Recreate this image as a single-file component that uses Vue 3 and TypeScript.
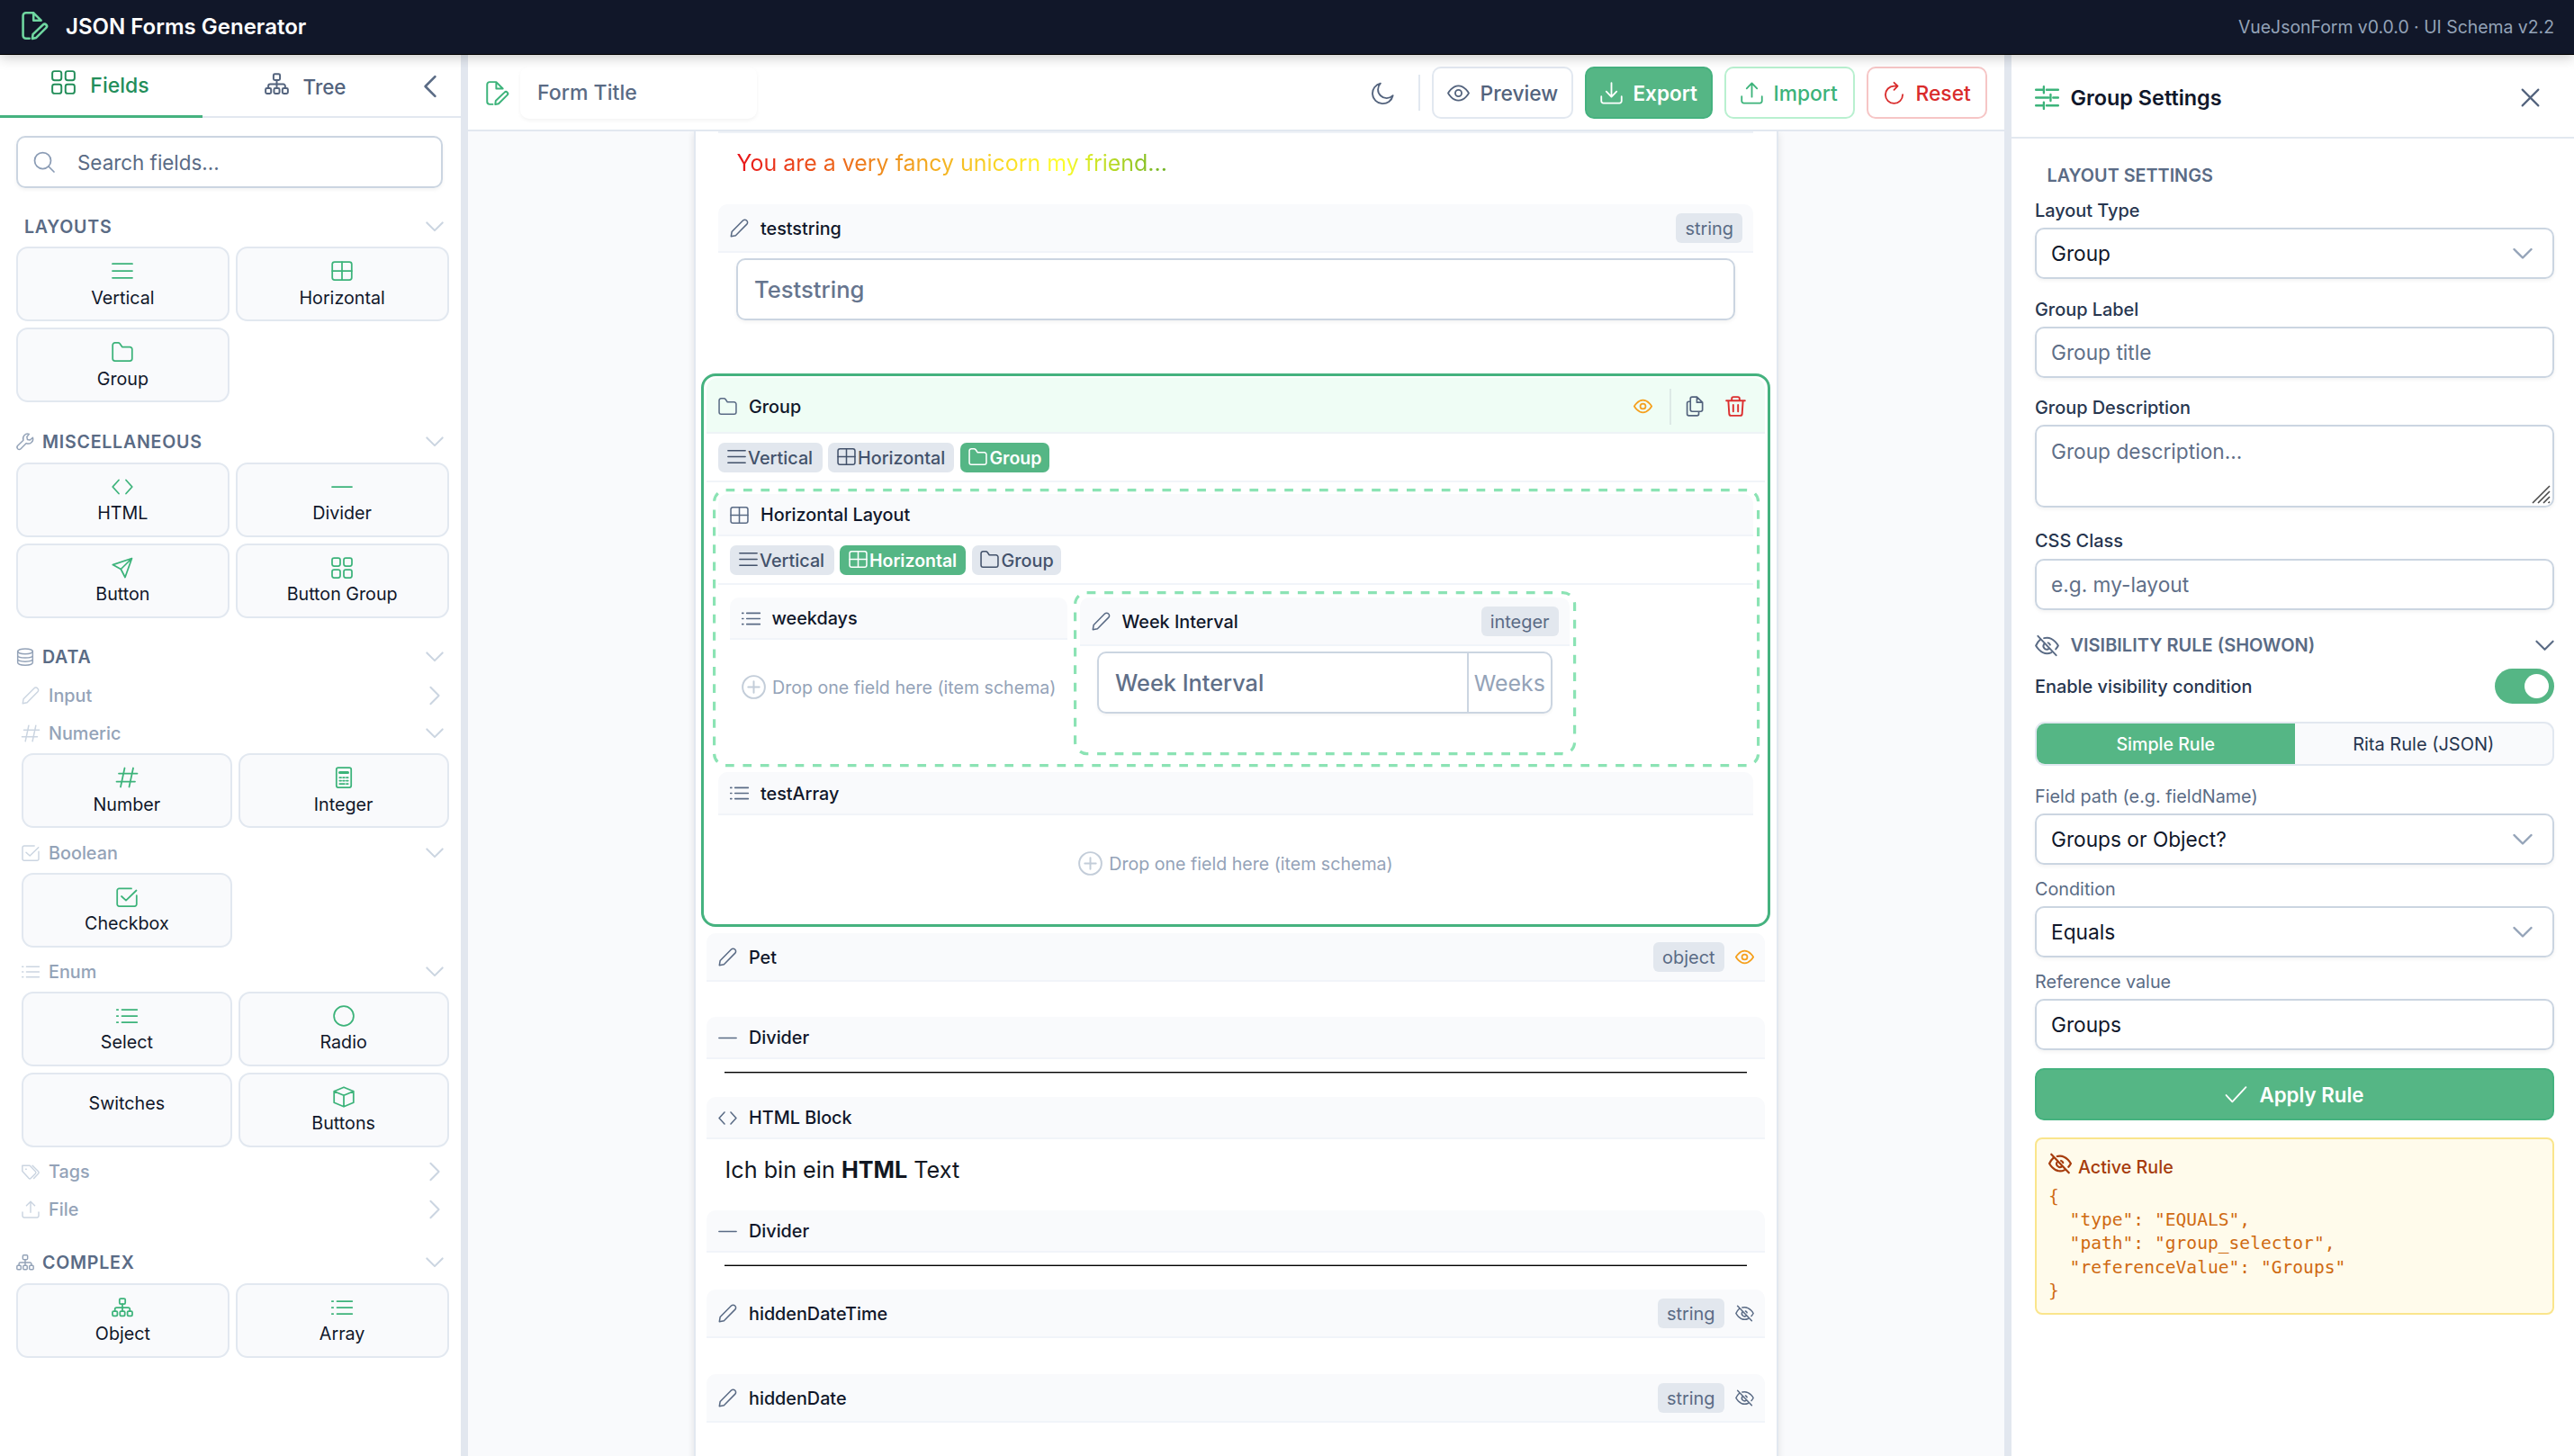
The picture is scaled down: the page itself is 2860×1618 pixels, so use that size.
<script setup lang="ts">
import { h } from 'vue'

const paths: Record<string, string> = {
  fileEdit: '<path d="M7.500 23H4.500a2.500 2.500 0 0 1-2.500-2.500v-17A2.500 2.500 0 0 1 4.500 1H11l6.500 6.500M11 1v6.500h6.500"/><path d="M10.500 19.500l8.700-8.300a1.900 1.900 0 0 1 2.700 2.700L13.300 22.400l-3.300.8z"/>',
  grid: '<rect x="1" y="1" width="9" height="9" rx="2.200"/><rect x="14" y="1" width="9" height="9" rx="2.200"/><rect x="1" y="14" width="9" height="9" rx="2.200"/><rect x="14" y="14" width="9" height="9" rx="2.200"/>',
  sitemap: '<rect x="8.800" y="2" width="6.400" height="6" rx="1.300"/><rect x="1" y="16" width="5.400" height="5.400" rx="1.300"/><rect x="9.300" y="16" width="5.400" height="5.400" rx="1.300"/><rect x="17.600" y="16" width="5.400" height="5.400" rx="1.300"/><path d="M12 8v8M3.700 16v-2.200a1.800 1.800 0 0 1 1.800-1.800h13a1.800 1.800 0 0 1 1.800 1.800V16"/>',
  search: '<circle cx="10.500" cy="10.500" r="9"/><path d="M17 17l6 6"/>',
  bars: '<path d="M1 4.200h22M1 12h22M1 19.800h22"/>',
  table: '<rect x="1.200" y="2" width="21.600" height="20" rx="2.600"/><path d="M12 2v20M1.200 12h21.600"/>',
  folder: '<path d="M1.200 19.500v-15A2.600 2.600 0 0 1 3.800 1.900h3.400c.8 0 1.400.3 1.900.9l2.600 3.800h8.500a2.600 2.600 0 0 1 2.600 2.600v10.300a2.600 2.600 0 0 1-2.600 2.600H3.800a2.600 2.600 0 0 1-2.600-2.600z"/>',
  wrench: '<path d="M17.200 1.600a6.300 6.300 0 0 0-7.700 8.200L2 17.200a2.900 2.900 0 0 0 0 4 2.900 2.900 0 0 0 4.100 0l7.400-7.300a6.300 6.300 0 0 0 8.600-7.600l-3.700 3.300-3.500-.7-.7-3.600z"/>',
  code: '<path d="M8 4.500L1.200 12 8 19.500M16 4.500L22.800 12 16 19.500"/>',
  minus: '<path d="M1 12h22"/>',
  send: '<path d="M22.500 1.500L1.300 8.600l9 4.900 4.700 9zM22.500 1.500L10.300 13.500"/>',
  database: '<ellipse cx="12" cy="4.600" rx="10" ry="3.500"/><path d="M2 4.600v15c0 2 4.500 3.500 10 3.500s10-1.500 10-3.500v-15M2 9.800c0 2 4.500 3.400 10 3.400s10-1.400 10-3.400M2 14.800c0 2 4.500 3.400 10 3.400s10-1.400 10-3.400"/>',
  pencil: '<path d="M1.500 22.500l1-6L16.600 2.300a3.300 3.300 0 0 1 4.700 0 3.300 3.300 0 0 1 .2 4.700L7.300 21.400z"/>',
  hash: '<path d="M9.500 1.500l-4.500 21M19 1.500l-4.500 21M3 7.500h20.500M.5 16.500H21"/>',
  calc: '<rect x="3.800" y="1" width="16.400" height="22" rx="2"/><path d="M7.500 6.500h9" stroke-width="3"/><path d="M7.300 12h1.800M11.100 12h1.800M14.900 12h1.800M7.300 15.500h1.800M11.100 15.500h1.800M14.900 15.500h1.800M7.300 19h5.600M14.900 19h1.800"/>',
  check: '<path d="M1.500 12.500l6.500 7L22.500 4"/>',
  checkSquare: '<path d="M17 2.400H3.400a2.200 2.200 0 0 0-2.200 2.200v15.200A2.200 2.200 0 0 0 3.400 22h17.200a2.200 2.200 0 0 0 2.200-2.200V10M6 11l5 4.600L22.500 4.500"/>',
  list: '<path d="M6.500 5h16.800M6.500 12h16.800M6.500 19h16.800M.8 5h1.400M.8 12h1.400M.8 19h1.400"/>',
  circle: '<circle cx="12" cy="12" r="10.900"/>',
  box: '<path d="M12 1.200l10.800 4.500v12.600L12 22.800 1.200 18.300V5.700zM1.200 5.700L12 10.200l10.800-4.500M12 10.200v12.600"/>',
  tags: '<path d="M1 4v7.500l8.500 9.300c.9.900 2 .9 2.900 0l6-6.200c.9-.9.900-2 0-2.900L11 4zM14.500 4l7.800 7.800c.9.900.9 2 0 2.900l-6 6.300M5.500 8.600h.8"/>',
  upload: '<path d="M1.200 15.500v5a2.200 2.200 0 0 0 2.200 2.200h17.200a2.200 2.200 0 0 0 2.200-2.200v-5M12 16V1.500M6.500 7L12 1.400 17.500 7"/>',
  download: '<path d="M1.200 15.500v5a2.200 2.200 0 0 0 2.200 2.200h17.200a2.200 2.200 0 0 0 2.200-2.200v-5M12 1.200v14.500M6.500 10.300L12 15.900l5.500-5.600"/>',
  moon: '<path d="M9.500 1.500A11 11 0 1 0 22.700 14.600 8 8 0 0 1 9.500 1.500z"/>',
  eye: '<path d="M1 12s4.200-7.800 11-7.800S23 12 23 12s-4.200 7.800-11 7.800S1 12 1 12z"/><circle cx="12" cy="12" r="3.400"/>',
  eyeSlash: '<path d="M5 6.300C2.500 8.500 1 12 1 12s4.200 7.800 11 7.800c1.600 0 3-.4 4.300-1M9 4.600c1-.3 2-.4 3-.4 6.800 0 11 7.800 11 7.800s-.9 1.700-2.400 3.500M3 2.500l18 19M9 10.400a3.400 3.400 0 0 0 5 4.500M13 9.200a3 3 0 0 1 2 2"/>',
  refresh: '<path d="M12 4.500a9.200 9.200 0 1 0 9.200 9.200M12 4.500h3.500M12 .8l3.900 3.700L12 8.500"/>',
  plusCircle: '<circle cx="12" cy="12" r="11"/><path d="M12 6.500v11M6.500 12h11"/>',
  copy: '<path d="M8.500 1.200H14l6.500 6.300v8.500a2 2 0 0 1-2 2h-10a2 2 0 0 1-2-2V3.200a2 2 0 0 1 2-2zM14 1.200v6.300h6.500M6.500 6.500H4.700a2 2 0 0 0-2 2v12.300a2 2 0 0 0 2 2h9.500a2 2 0 0 0 2-2V18"/>',
  trash: '<path d="M1.200 5.500h21.600M3.500 5.500l1 15.200a2.200 2.200 0 0 0 2.200 2.100h10.600a2.200 2.200 0 0 0 2.200-2.100l1-15.200M7.500 5.500V3.200a2 2 0 0 1 2-2h5a2 2 0 0 1 2 2v2.300M9.200 10.500v7.500M14.800 10.500v7.500"/>',
  sliders: '<path d="M1 4.200h7.500M8.800 1v6.400M11.500 4.200H23M1 12h12.500M15.500 8.800v6.400M18 12h5M1 19.800h7.500M8.800 16.600V23M11.500 19.800H23"/>',
  times: '<path d="M3.500 3.500l17 17M20.500 3.500l-17 17"/>',
  down: '<path d="M2.500 7l9.500 9.500L21.500 7"/>',
  right: '<path d="M7 2l10 10L7 22"/>',
  left: '<path d="M17 2L7 12l10 10"/>',
}

const Ico = (p: { n: string; s: number; w?: number }) =>
  h('svg', {
    width: p.s, height: p.s, viewBox: '0 0 24 24', fill: 'none', stroke: 'currentColor',
    'stroke-width': p.w ?? 1.75, 'stroke-linecap': 'round', 'stroke-linejoin': 'round',
    innerHTML: paths[p.n],
  })
Ico.props = ['n', 's', 'w']

type Card = [label: string, icon?: string]
interface Sub { label: string; icon: string; open: boolean; cards: Card[] }
interface Section { label: string; icon?: string; cards: Card[]; subs: Sub[] }

const sections: Section[] = [
  { label: 'LAYOUTS', cards: [['Vertical', 'bars'], ['Horizontal', 'table'], ['Group', 'folder']], subs: [] },
  { label: 'MISCELLANEOUS', icon: 'wrench', cards: [['HTML', 'code'], ['Divider', 'minus'], ['Button', 'send'], ['Button Group', 'grid']], subs: [] },
  {
    label: 'DATA', icon: 'database', cards: [], subs: [
      { label: 'Input', icon: 'pencil', open: false, cards: [] },
      { label: 'Numeric', icon: 'hash', open: true, cards: [['Number', 'hash'], ['Integer', 'calc']] },
      { label: 'Boolean', icon: 'checkSquare', open: true, cards: [['Checkbox', 'checkSquare']] },
      { label: 'Enum', icon: 'list', open: true, cards: [['Select', 'list'], ['Radio', 'circle'], ['Switches'], ['Buttons', 'box']] },
      { label: 'Tags', icon: 'tags', open: false, cards: [] },
      { label: 'File', icon: 'upload', open: false, cards: [] },
    ],
  },
  { label: 'COMPLEX', icon: 'sitemap', cards: [['Object', 'sitemap'], ['Array', 'list']], subs: [] },
]

const chips: Card[] = [['Vertical', 'bars'], ['Horizontal', 'table'], ['Group', 'folder']]

const rule = `{
  "type": "EQUALS",
  "path": "group_selector",
  "referenceValue": "Groups"
}`
</script>

<template>
  <div class="app">
    <header class="topbar">
      <Ico n="fileEdit" :s="31" :w="2" class="brand" />
      <h1>JSON Forms Generator</h1>
      <span class="version">VueJsonForm v0.0.0 · UI Schema v2.2</span>
    </header>

    <div class="body">
      <aside class="sidebar">
        <nav class="tabs">
          <div class="tab active"><Ico n="grid" :s="27" /><span>Fields</span></div>
          <div class="tab tree"><Ico n="sitemap" :s="27" /><span>Tree</span></div>
          <div class="collapse"><Ico n="left" :s="26" :w="2.400" /></div>
        </nav>
        <div class="search"><Ico n="search" :s="24" /><span>Search fields...</span></div>

        <section v-for="sec in sections" :key="sec.label" class="section">
          <div class="sec-title" :class="{ bare: !sec.icon }">
            <Ico v-if="sec.icon" :n="sec.icon" :s="20" class="sec-icon" />
            <span>{{ sec.label }}</span>
            <Ico n="down" :s="22" :w="2.200" class="chev" />
          </div>
          <div v-if="sec.cards.length" class="cards">
            <div v-for="c in sec.cards" :key="c[0]" class="card">
              <Ico :n="c[1]!" :s="24" /><span>{{ c[0] }}</span>
            </div>
          </div>
          <div v-for="s in sec.subs" :key="s.label" class="sub">
            <div class="sub-title">
              <Ico :n="s.icon" :s="20" class="sub-icon" />
              <span>{{ s.label }}</span>
              <Ico :n="s.open ? 'down' : 'right'" :s="22" :w="2.200" class="chev" />
            </div>
            <div v-if="s.cards.length" class="cards">
              <div v-for="c in s.cards" :key="c[0]" class="card">
                <Ico v-if="c[1]" :n="c[1]" :s="24" /><span>{{ c[0] }}</span>
              </div>
            </div>
          </div>
        </section>
      </aside>
      <div class="gutter"></div>

      <main class="main">
        <div class="toolbar">
          <Ico n="fileEdit" :s="27" class="green" />
          <div class="form-title">Form Title</div>
          <Ico n="moon" :s="25" class="moon" />
          <i class="vsep"></i>
          <button class="btn preview"><Ico n="eye" :s="25" />Preview</button>
          <button class="btn export"><Ico n="download" :s="25" />Export</button>
          <button class="btn import"><Ico n="upload" :s="25" />Import</button>
          <button class="btn reset"><Ico n="refresh" :s="25" />Reset</button>
        </div>

        <div class="canvas">
          <div class="sheet">
            <div class="inner strip"></div>
            <div class="inner fancy"><span>You are a very fancy unicorn my friend...</span></div>
            <div class="inner bar tagged">
              <Ico n="pencil" :s="21" /><b>teststring</b><span class="tag">string</span>
            </div>
            <div class="field">Teststring</div>

            <div class="group">
              <div class="bar group-bar">
                <Ico n="folder" :s="21" /><b>Group</b>
                <Ico n="eye" :s="21" :w="2" class="amber" />
                <i class="gsep"></i>
                <Ico n="copy" :s="23" class="act-copy" />
                <Ico n="trash" :s="23" :w="2" class="act-trash" />
              </div>
              <div class="chips">
                <span v-for="c in chips" :key="c[0]" class="chip" :class="[c[1], { on: c[0] === 'Group' }]"><Ico :n="c[1]!" :s="21" />{{ c[0] }}</span>
              </div>

              <div class="dashed outer">
                <svg class="dash"><rect x="1.600" y="1.600" width="1160" height="306" rx="13" pathLength="2925" /></svg>
                <div class="bar"><Ico n="table" :s="21" /><b>Horizontal Layout</b></div>
                <div class="chips">
                  <span v-for="c in chips" :key="c[0]" class="chip" :class="[c[1], { on: c[0] === 'Horizontal' }]"><Ico :n="c[1]!" :s="21" />{{ c[0] }}</span>
                </div>
                <div class="hrow">
                  <div class="weekdays">
                    <div class="bar"><Ico n="list" :s="21" /><b>weekdays</b></div>
                    <div class="drop"><Ico n="plusCircle" :s="27" class="plus" />Drop one field here (item schema)</div>
                  </div>
                  <div class="dashed interval">
                    <svg class="dash"><rect x="1.600" y="1.600" width="555" height="179" rx="13" pathLength="1443" /></svg>
                    <div class="bar tagged">
                      <Ico n="pencil" :s="21" /><b>Week Interval</b><span class="tag">integer</span>
                    </div>
                    <div class="split"><span>Week Interval</span><em>Weeks</em></div>
                  </div>
                </div>
              </div>

              <div class="test-array">
                <div class="bar"><Ico n="list" :s="21" /><b>testArray</b></div>
                <div class="drop center"><Ico n="plusCircle" :s="27" class="plus" />Drop one field here (item schema)</div>
              </div>
            </div>

            <div class="bar tagged pet">
              <Ico n="pencil" :s="21" /><b>Pet</b><span class="tag">object</span><Ico n="eye" :s="21" :w="2" class="amber" />
            </div>
            <div class="bar div1"><Ico n="minus" :s="21" /><b>Divider</b></div>
            <div class="hr"></div>
            <div class="bar html"><Ico n="code" :s="21" /><b>HTML Block</b></div>
            <p class="html-text">Ich bin ein&nbsp;<strong>HTML</strong>&nbsp;Text</p>
            <div class="bar div2"><Ico n="minus" :s="21" /><b>Divider</b></div>
            <div class="hr second"></div>
            <div class="bar tagged hid1">
              <Ico n="pencil" :s="21" /><b>hiddenDateTime</b><span class="tag">string</span><Ico n="eyeSlash" :s="21" />
            </div>
            <div class="bar tagged hid2">
              <Ico n="pencil" :s="21" /><b>hiddenDate</b><span class="tag">string</span><Ico n="eyeSlash" :s="21" />
            </div>
          </div>
        </div>
      </main>
      <div class="gutter"></div>

      <aside class="settings">
        <div class="set-head">
          <Ico n="sliders" :s="27" :w="2.100" class="green" /><h2>Group Settings</h2>
          <Ico n="times" :s="25" :w="2.100" class="close" />
        </div>
        <div class="set-body">
          <div class="caption lead">LAYOUT SETTINGS</div>
          <label class="lbl l1">Layout Type</label>
          <div class="ctl">Group<Ico n="down" :s="24" :w="2.400" class="caret" /></div>
          <label class="lbl l2">Group Label</label>
          <div class="ctl ph">Group title</div>
          <label class="lbl l2b">Group Description</label>
          <div class="ctl ph area">
            Group description...
            <svg class="grip" width="21" height="21" viewBox="0 0 21 21"><path d="M1 20L20 1M7 20L20 7M13 20l7-7M18.500 20l1.500-1.500" /></svg>
          </div>
          <label class="lbl l3">CSS Class</label>
          <div class="ctl ph">e.g. my-layout</div>

          <div class="caption vis">
            <Ico n="eyeSlash" :s="27" /><span>VISIBILITY RULE (SHOWON)</span><Ico n="down" :s="23" :w="2.200" class="vis-chev" />
          </div>
          <div class="enable"><span class="lbl">Enable visibility condition</span><i class="toggle"></i></div>
          <div class="seg"><span class="on">Simple Rule</span><span>Rita Rule (JSON)</span></div>

          <label class="lbl dim d1">Field path (e.g. fieldName)</label>
          <div class="ctl">Groups or Object?<Ico n="down" :s="24" :w="2.400" class="caret" /></div>
          <label class="lbl dim">Condition</label>
          <div class="ctl">Equals<Ico n="down" :s="24" :w="2.400" class="caret" /></div>
          <label class="lbl dim">Reference value</label>
          <div class="ctl">Groups</div>
          <button class="apply"><Ico n="check" :s="25" />Apply Rule</button>
          <div class="rule">
            <div class="rule-head"><Ico n="eyeSlash" :s="26" :w="2" /><span>Active Rule</span></div>
            <pre>{{ rule }}</pre>
          </div>
        </div>
      </aside>
    </div>
  </div>
</template>

<style>
html,
body {
  background: #fff;
  overflow: hidden;
}
</style>

<style scoped>
.app {
  width: 2860px;
  height: 1618px;
  display: flex;
  flex-direction: column;
  overflow: hidden;
  font-family: Inter, "Liberation Sans", sans-serif;
  font-size: 22.7px;
  color: #10172a;
}
.app * { box-sizing: border-box; }
svg { display: block; flex: none; overflow: visible; }
span, b, h1, h2 { white-space: nowrap; }

.topbar {
  height: 61px;
  flex: none;
  display: flex;
  align-items: center;
  padding: 0 22px 1px 23px;
  background: #111729;
  border-bottom: 1px solid #000;
  box-shadow: 0 2px 14px rgba(0, 0, 0, 0.24);
  position: relative;
  z-index: 2;
}
.topbar .brand { color: #6fd6a0; margin-top: -2px; }
h1 { margin: 0 0 0 19px; font-size: 24px; font-weight: 600; color: #fff; }
.version { margin-left: auto; font-size: 19.4px; color: #94a3b8; }

.body { flex: 1; display: flex; min-height: 0; }
.gutter { width: 8px; flex: none; background: #e2e7ef; }
.sidebar { width: 512px; flex: none; background: #fff; }

.tabs { height: 70px; display: flex; border-bottom: 2px solid #e2e8f0; color: #53637d; font-weight: 500; }
.tab { width: 228px; display: flex; align-items: center; justify-content: center; gap: 16px; height: 70px; font-size: 22.4px; }
.tab.active { width: 225px; height: 70px; color: #238e5a; border-bottom: 3px solid #45b27f; font-size: 23px; padding: 0 2px 0 0; position: relative; }
.tab svg { margin-top: -6px; }
.collapse { flex: 1; display: flex; align-items: center; padding: 1px 0 0 12px; color: #5a6b85; }

.search {
  margin: 20px 20px 0 18px;
  height: 58px;
  display: flex;
  align-items: center;
  gap: 25px;
  padding: 0 17px;
  border: 2px solid #cbd5e1;
  border-radius: 10px;
  box-shadow: 0 2px 4px rgba(18, 18, 23, 0.05);
  color: #5a6b85;
  font-size: 22.4px;
}
.search svg { color: #8b9cb5; }

.section { padding: 0 13.500px 0 18px; margin-top: 27.500px; }
.search + .section { margin-top: 26px; }
.sec-title, .sub-title { display: flex; align-items: center; color: #5a6b85; padding-right: 5px; }
.sec-title { height: 32px; font-size: 19.6px; font-weight: 600; letter-spacing: 0.75px; gap: 9px; }
.sec-title.bare { padding: 1px 5px 0 9px; }
.sec-icon { color: #94a3b8; }
.chev { margin-left: auto; color: #cbd5e1; }
.cards { display: grid; grid-template-columns: 1fr 1fr; gap: 7px; margin-top: 7px; }
.card {
  height: 83px;
  display: flex;
  flex-direction: column;
  align-items: center;
  padding-top: 13px;
  border: 2px solid #e2e8f0;
  border-radius: 13px;
  background: #f9fafc;
  font-size: 19.7px;
}
.card svg { color: #3cb37a; }
.card span { line-height: 24px; margin-top: 5.500px; }
.card span:first-child { margin-top: 7px; }
.sub { margin: 12.200px 0 0 6px; }
.sub-title { height: 30px; gap: 10px; font-size: 19.8px; font-weight: 500; color: #94a3b8; }
.sub-icon { color: #cbd5e1; }

.main { width: 1707px; flex: none; display: flex; flex-direction: column; }
.toolbar { height: 85px; flex: none; display: flex; align-items: center; padding: 1px 19px 0 19px; border-bottom: 2px solid #e2e8f0; background: #fff; font-weight: 500; }
.green { color: #3cb37a; }
.form-title { width: 263px; height: 58px; margin-left: 12px; padding-left: 19px; display: flex; align-items: center; border-radius: 10px; box-shadow: 0 2px 4px rgba(18, 18, 23, 0.05); color: #5a6b85; font-size: 23.1px; }
.moon { margin-left: auto; color: #53637d; }
.vsep { width: 2px; height: 40px; margin: 0 13px 0 27px; background: #e2e8f0; }
.btn, .apply { font: 500 22.800px Inter, sans-serif; display: flex; align-items: center; border: 2px solid; border-radius: 10px; background: #fff; padding: 0; }
.btn { height: 58px; gap: 12px; padding-left: 15px; margin-right: 13px; }
.preview { width: 157px; border-color: #e2e8f0; color: #53637d; }
.export { width: 142px; border-color: #45b27f; background: #55b685; color: #fff; font-weight: 600; font-size: 22.5px; }
.import { width: 145px; border-color: #b9f0d0; color: #3cb37a; padding-left: 16px; }
.reset { width: 134.500px; margin-right: 0; border-color: #f6c6c6; color: #d92b2b; padding-left: 16px; }

.canvas { flex: 1; min-height: 0; overflow: hidden; background: #f9fafc; }
.sheet { width: 1205px; height: 1480px; margin: 0 auto; padding: 0 13px 0 12px; background: #fff; border: 2px solid #e2e8f0; border-width: 0 2px; box-shadow: 0 2px 8px rgba(0, 0, 0, 0.1); }
.inner { margin: 0 13px 0 13px; }
.strip { height: 2px; background: #eef2f7; }
.fancy { height: 66px; display: flex; align-items: center; padding-left: 20.500px; font-size: 24.95px; }
.fancy span { width: 1108px; background: linear-gradient(to right, #e8141a 0, #ef8e1c 165px, #ffff2c 360px, #6ab023 480px, #2a62c9 800px, #8a2be2 1108px); -webkit-background-clip: text; background-clip: text; color: transparent; }

.bar { height: 47px; display: flex; align-items: center; padding: 1px 12px 0 13px; background: #f9fafc; border-bottom: 2px solid #f1f4f9; border-radius: 10px 10px 0 0; color: #5a6b85; }
.bar b { margin-left: 13px; font-size: 19.8px; font-weight: 500; color: #10172a; }
.bar.tagged { height: 54px; }
.inner.bar { margin-top: 13px; }
.tag { margin-left: auto; height: 33px; display: flex; align-items: center; padding: 0 10px; border-radius: 6px; background: #e2e7ee; color: #5a6b85; font-size: 19.9px; }
.tag + svg { margin-left: 12.500px; }
.amber { color: #f5a01e; }
.field { height: 69px; margin: 6px 33px 0 33px; padding-left: 18px; display: flex; align-items: center; border: 2px solid #cbd5e1; border-radius: 10px; box-shadow: 0 2px 4px rgba(18, 18, 23, 0.05); font-size: 25.6px; font-weight: 500; color: #66758e; }

.group { height: 615px; margin: 59px -6px 0; padding: 2px 3px; border: 3px solid #45b27f; border-radius: 16px; display: flex; flex-direction: column; }
.bar.group-bar { height: 62px; background: #effdf5; border-bottom-color: #eef3f6; border-radius: 12px 12px 0 0; padding: 3px 21px 0 13px; }
.group-bar .amber { margin-left: auto; }
.gsep { width: 2px; height: 40px; margin: 0 15px 0 19px; background: #dde9e6; }
.act-copy { color: #53637d; }
.act-trash { margin-left: 22px; color: #dc2f2f; }

.chips { height: 54px; display: flex; gap: 6.500px; padding: 10px 13px 0; border-bottom: 2px solid #f1f4f9; }
.chip { width: 115.500px; height: 33px; display: flex; align-items: center; gap: 2.500px; padding: 0 0 0 9.500px; border-radius: 7px; background: #e2e7ee; color: #43526b; font-size: 19.8px; font-weight: 500; }
.chip.table { width: 140px; }
.chip.folder { width: 99.500px; }
.chip svg { margin-top: -3px; }
.chip.on { background: #55b685; color: #fff; font-weight: 600; font-size: 19.5px; }

.dashed { position: relative; padding: 6px 7px; }
.dash { position: absolute; left: 0; top: 0; width: 100%; height: 100%; }
.dash rect { fill: none; stroke: #8be3b4; stroke-width: 3.200; stroke-dasharray: 9.750 9.750; }
.outer { margin: 7px 6px 0 7px; height: 309px; flex: none; padding-left: 6px; }
.hrow { display: flex; padding: 7px 0 0 12.500px; }
.weekdays { width: 375px; margin: 7px 7px 0 0; }
.drop { height: 105px; display: flex; align-items: center; gap: 7px; padding-left: 13.500px; color: #94a3b8; font-size: 19.6px; white-space: nowrap; }
.plus { color: #c3cdd9; }
.drop.center { justify-content: center; padding: 1px 0 0; height: 106px; }
.interval { width: 558px; height: 182px; padding-top: 7px; }
.split { height: 69px; margin: 6px 19px 0 19.500px; display: flex; align-items: stretch; border: 2px solid #cbd5e1; border-radius: 10px; color: #5f6f88; font-size: 25.300px; box-shadow: 0 2px 3px rgba(18, 18, 23, 0.04); }
.split span { width: 411px; display: flex; align-items: center; padding-left: 18px; border-right: 2px solid #cbd5e1; font-weight: 500; }
.split em { flex: 1; display: flex; align-items: center; justify-content: center; font-style: normal; font-size: 24.900px; color: #94a3b8; }
.test-array { margin: 6px 13px 0 13px; }
.test-array .bar { height: 48px; }

.pet { margin-top: 7px; }
.div1 { margin-top: 39px; }
.hr { height: 2px; margin: 14px 20px 0; background: linear-gradient(#000 50%, #999 50%); }
.hr.second { margin-top: 13px; background: linear-gradient(#999 50%, #000 50%); }
.html { margin-top: 26px; }
.html-text { margin: 0; height: 68px; display: flex; align-items: center; padding-left: 20.500px; font-size: 25.200px; color: #121722; }
.html-text strong { font-weight: 700; }
.div2 { margin-top: 11px; }
.hid1 { margin-top: 26px; }
.hid2 { margin-top: 40px; }

.settings { flex: 1; background: #fff; }
.set-head { height: 93px; display: flex; align-items: center; padding: 3px 36px 0 25.500px; border-bottom: 2px solid #e2e8f0; }
h2 { margin: 0 0 0 13px; font-size: 23.400px; font-weight: 600; }
.close { margin-left: auto; color: #53637d; }
.set-body { padding: 26px 22px 0 26px; display: flex; flex-direction: column; }
.caption { height: 28px; display: flex; align-items: center; color: #5a6b85; font-weight: 600; font-size: 19.9px; }
.caption.lead { padding: 1px 0 0 13.500px; font-size: 19.800px; }
.lbl { height: 26px; margin-bottom: 6px; display: flex; align-items: center; font-size: 19.9px; font-weight: 500; color: #27364f; }
.l1 { margin-top: 13px; }
.l2 { margin-top: 21px; }
.l2b { margin-top: 20px; }
.l3 { margin-top: 24px; margin-bottom: 7px; }
.ctl { height: 57px; display: flex; align-items: center; padding: 0 21px 0 16px; border: 2px solid #cbd5e1; border-radius: 10px; box-shadow: 0 2px 4px rgba(18, 18, 23, 0.05); font-size: 22.7px; }
.ph { color: #5f6f88; }
.caret { margin-left: auto; color: #94a3b8; }
.area { height: 92px; align-items: flex-start; padding-top: 13px; position: relative; line-height: 30px; }
.grip { position: absolute; right: 2px; bottom: 2px; }
.grip path { stroke: #4a4a4a; stroke-width: 1.600; fill: none; }
.vis { margin-top: 25px; }
.vis span { margin-left: 12.500px; font-size: 20px; }
.vis-chev { margin-left: auto; margin-right: -1px; }
.enable { margin-top: 12px; height: 39px; display: flex; align-items: center; justify-content: space-between; }
.enable .lbl { margin: 0; }
.toggle { width: 66px; height: 39px; border-radius: 20px; background: #55b685; display: flex; align-items: center; justify-content: flex-end; padding-right: 6px; }
.toggle::after { content: ""; width: 27px; height: 27px; border-radius: 50%; background: #fff; }
.seg { margin-top: 20px; height: 49px; display: flex; border: 2px solid #e2e8f0; border-radius: 11px; overflow: hidden; background: #f9fafc; font-size: 20px; color: #27364f; }
.seg span { flex: 1; display: flex; align-items: center; justify-content: center; }
.seg .on { background: #55b685; color: #fff; font-weight: 500; font-size: 19.6px; }
.lbl.dim { font-weight: 400; color: #5a6b85; margin: 14px 0 6px; font-size: 19.8px; }
.lbl.dim.d1 { margin-top: 21px; }
.apply { height: 58px; margin-top: 20px; gap: 13px; justify-content: center; background: #55b685; border-color: #45b27f; color: #fff; font-size: 22.300px; font-weight: 600; }
.rule { margin-top: 19px; height: 197px; padding: 12px 13px; background: #fffbeb; border: 2px solid #fae58c; border-radius: 8px; color: #cf6a12; }
.rule-head { display: flex; align-items: center; gap: 7px; height: 34px; color: #a63c0c; font-weight: 500; font-size: 19.700px; padding-top: 3px; }
.rule-head svg { margin-top: -8px; }
pre { margin: 5px 0 0; font: 19.600px/26.200px "DejaVu Sans Mono", "Liberation Mono", monospace; }
</style>
